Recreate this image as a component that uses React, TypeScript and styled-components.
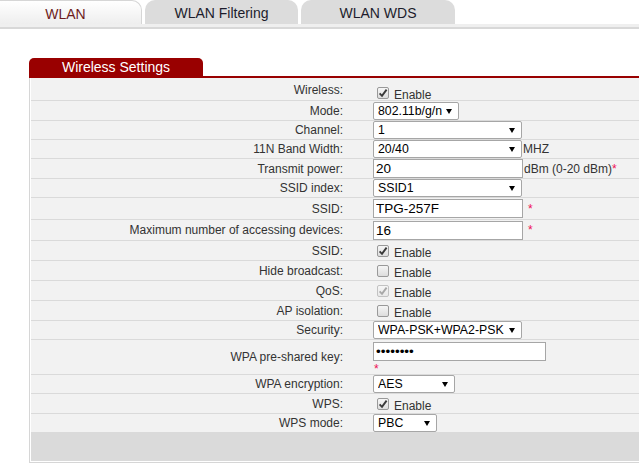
import React from "react";
import styled, { createGlobalStyle } from "styled-components";

const Global = createGlobalStyle`
  html, body { margin: 0; padding: 0; background: #fff; overflow: hidden; }
  body { font-family: "Liberation Sans", Arial, sans-serif; }
  * { box-sizing: border-box; }
`;

const Page = styled.div`
  width: 639px;
  height: 464px;
  overflow: hidden;
`;

const TabBar = styled.div`
  display: flex;
  gap: 3px;
  height: 24px;
  margin-left: -11px;
`;

const Tab = styled.div<{ $active?: boolean; $w: number }>`
  width: ${(p) => p.$w}px;
  height: 24px;
  border-radius: 10px 10px 0 0;
  display: flex;
  align-items: center;
  justify-content: center;
  font-size: 14px;
  padding-top: 2px;
  color: ${(p) => (p.$active ? "#6e1c1c" : "#1c1c2c")};
  background: ${(p) => (p.$active ? "linear-gradient(#ffffff, #eeeeee)" : "#dcdcdc")};
  border: ${(p) => (p.$active ? "1px solid #d6d6d6" : "none")};
  border-bottom: none;
`;

const TabRule = styled.div`
  height: 5px;
  background: #efefef;
  border-bottom: 2px solid #d8d8d8;
`;

const Section = styled.section`
  margin: 29px 0 0 29px;
  width: 620px;
`;

const SectionHeader = styled.div`
  display: flex;
  border-bottom: 2px solid #990000;
`;

const SectionTitle = styled.div`
  width: 174px;
  height: 18px;
  background: #990000;
  border-radius: 5px 5px 0 0;
  color: #fff;
  font-size: 14px;
  line-height: 19px;
  text-align: center;
`;

const SectionBody = styled.div`
  border-left: 1px solid #d6d6d6;
  border-bottom: 1px solid #d6d6d6;
  padding: 0 0 1px 1px;
  background: #fff;
`;

const Row = styled.div<{ $h: number }>`
  display: grid;
  grid-template-columns: 314px 1fr;
  align-items: center;
  height: ${(p) => p.$h}px;
  background: #f2f2f2;
  border-bottom: 1px solid #dadada;
`;

const Label = styled.div`
  text-align: right;
  padding-right: 2px;
  font-size: 12px;
  color: #333;
`;

const Control = styled.div<{ $stack?: boolean }>`
  padding-left: 28px;
  display: flex;
  flex-direction: ${(p) => (p.$stack ? "column" : "row")};
  align-items: ${(p) => (p.$stack ? "flex-start" : "center")};
  justify-content: ${(p) => (p.$stack ? "center" : "flex-start")};
  height: 100%;
`;

const CheckGroup = styled.label<{ $drop?: boolean }>`
  display: flex;
  align-items: center;
  margin-left: 4px;
  margin-top: ${(p) => (p.$drop ? "6px" : "1px")};
`;

const Box = styled.span<{ $disabled?: boolean }>`
  width: 12px;
  height: 12px;
  border: 1px solid ${(p) => (p.$disabled ? "#c2c2c2" : "#999")};
  border-radius: 2px;
  background: ${(p) => (p.$disabled ? "linear-gradient(#f6f6f6, #e8e8e8)" : "linear-gradient(#f6f6f6, #dddddd)")};
  display: flex;
  align-items: center;
  justify-content: center;
`;

const EnableText = styled.span`
  margin-left: 5px;
  margin-top: 4px;
  font-size: 12px;
  color: #333;
`;

const SelectWrap = styled.span<{ $w: number }>`
  position: relative;
  display: inline-flex;
  width: ${(p) => p.$w}px;
  height: 18px;
`;

const Select = styled.select`
  appearance: none;
  -webkit-appearance: none;
  width: 100%;
  height: 100%;
  border: 1px solid #a6a6a6;
  border-radius: 2px;
  background: #fff;
  font-family: "Liberation Sans", Arial, sans-serif;
  font-size: 12.3px;
  color: #000;
  padding: 0 14px 0 4px;
  outline: none;
`;

const Arrow = styled.svg`
  position: absolute;
  right: 7px;
  top: 7px;
  pointer-events: none;
`;

const TextInput = styled.input<{ $w: number }>`
  width: ${(p) => p.$w}px;
  height: 19px;
  border: 1px solid #a6a6a6;
  background: #fff;
  font-family: "Liberation Sans", Arial, sans-serif;
  font-size: 13.5px;
  color: #000;
  padding: 0 3px 0 2px;
  outline: none;
`;

const Unit = styled.span`
  font-size: 12px;
  color: #333;
  margin-left: 1px;
`;

const Req = styled.span<{ $gap?: number }>`
  color: #ee1155;
  font-size: 12px;
  margin-left: ${(p) => p.$gap ?? 0}px;
`;

const ReqBelow = styled.span`
  color: #ee1155;
  font-size: 12px;
  line-height: 10px;
  height: 9px;
  margin: 3px 0 0 1px;
`;

const Footer = styled.div`
  height: 28px;
  background: #dadada;
`;

function Check({ checked, disabled, drop }: { checked?: boolean; disabled?: boolean; drop?: boolean }) {
  return (
    <CheckGroup $drop={drop}>
      <Box $disabled={disabled}>
        {checked && (
          <svg width="10" height="10" viewBox="0 0 10 10">
            <path
              d="M1.6 5.4 L4 7.8 L8.6 1.6"
              fill="none"
              stroke={disabled ? "#a8a8a8" : "#3a3a3a"}
              strokeWidth="1.9"
            />
          </svg>
        )}
      </Box>
      <EnableText>Enable</EnableText>
    </CheckGroup>
  );
}

function Drop({ w, value, options }: { w: number; value: string; options?: string[] }) {
  const opts = options ?? [value];
  return (
    <SelectWrap $w={w}>
      <Select defaultValue={value}>
        {opts.map((o) => (
          <option key={o} value={o}>
            {o}
          </option>
        ))}
      </Select>
      <Arrow width="6" height="5" viewBox="0 0 6 5">
        <polygon points="0,0 6,0 3,5" fill="#000" />
      </Arrow>
    </SelectWrap>
  );
}

export default function App() {
  return (
    <Page>
      <Global />
      <TabBar>
        <Tab $active $w={153}>WLAN</Tab>
        <Tab $w={153}>WLAN Filtering</Tab>
        <Tab $w={154}>WLAN WDS</Tab>
      </TabBar>
      <TabRule />
      <Section>
        <SectionHeader>
          <SectionTitle>Wireless Settings</SectionTitle>
        </SectionHeader>
        <SectionBody>
          <Row $h={23}>
            <Label>Wireless:</Label>
            <Control>
              <Check checked drop />
            </Control>
          </Row>
          <Row $h={20}>
            <Label>Mode:</Label>
            <Control>
              <Drop w={86} value="802.11b/g/n" options={["802.11b", "802.11g", "802.11n", "802.11b/g", "802.11b/g/n"]} />
            </Control>
          </Row>
          <Row $h={19}>
            <Label>Channel:</Label>
            <Control>
              <Drop w={149} value="1" />
            </Control>
          </Row>
          <Row $h={19}>
            <Label>11N Band Width:</Label>
            <Control>
              <Drop w={149} value="20/40" options={["20", "20/40"]} />
              <Unit>MHZ</Unit>
            </Control>
          </Row>
          <Row $h={20}>
            <Label>Transmit power:</Label>
            <Control>
              <TextInput $w={150} defaultValue="20" />
              <Unit>dBm (0-20 dBm)</Unit>
              <Req>*</Req>
            </Control>
          </Row>
          <Row $h={19}>
            <Label>SSID index:</Label>
            <Control>
              <Drop w={149} value="SSID1" />
            </Control>
          </Row>
          <Row $h={22}>
            <Label>SSID:</Label>
            <Control>
              <TextInput $w={150} defaultValue="TPG-257F" />
              <Req $gap={5}>*</Req>
            </Control>
          </Row>
          <Row $h={21}>
            <Label>Maximum number of accessing devices:</Label>
            <Control>
              <TextInput $w={150} defaultValue="16" />
              <Req $gap={5}>*</Req>
            </Control>
          </Row>
          <Row $h={20}>
            <Label>SSID:</Label>
            <Control>
              <Check checked />
            </Control>
          </Row>
          <Row $h={20}>
            <Label>Hide broadcast:</Label>
            <Control>
              <Check />
            </Control>
          </Row>
          <Row $h={20}>
            <Label>QoS:</Label>
            <Control>
              <Check checked disabled />
            </Control>
          </Row>
          <Row $h={20}>
            <Label>AP isolation:</Label>
            <Control>
              <Check />
            </Control>
          </Row>
          <Row $h={19}>
            <Label>Security:</Label>
            <Control>
              <Drop w={149} value="WPA-PSK+WPA2-PSK" />
            </Control>
          </Row>
          <Row $h={35}>
            <Label>WPA pre-shared key:</Label>
            <Control $stack>
              <TextInput $w={173} type="password" defaultValue="12345678" />
              <ReqBelow>*</ReqBelow>
            </Control>
          </Row>
          <Row $h={19}>
            <Label>WPA encryption:</Label>
            <Control>
              <Drop w={82} value="AES" options={["AES", "TKIP", "TKIP+AES"]} />
            </Control>
          </Row>
          <Row $h={20}>
            <Label>WPS:</Label>
            <Control>
              <Check checked />
            </Control>
          </Row>
          <Row $h={19}>
            <Label>WPS mode:</Label>
            <Control>
              <Drop w={64} value="PBC" options={["PBC", "PIN"]} />
            </Control>
          </Row>
          <Footer />
        </SectionBody>
      </Section>
    </Page>
  );
}
